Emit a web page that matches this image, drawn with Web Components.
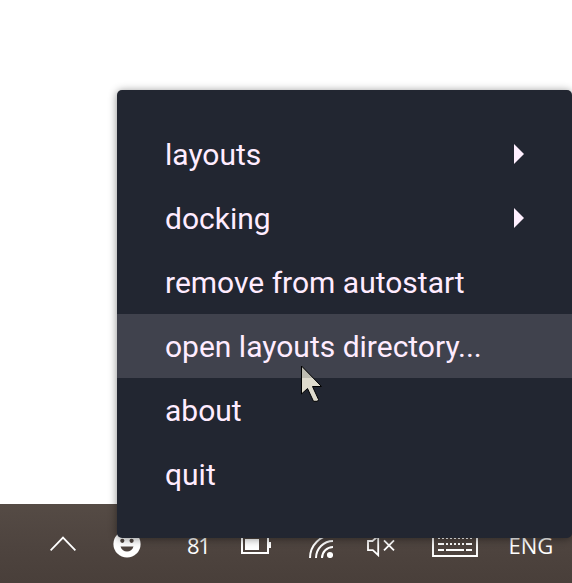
<!DOCTYPE html>
<html lang="en">
<head>
<meta charset="utf-8">
<title>Tray menu</title>
<style>
html,body{margin:0;height:100%;overflow:hidden;background:#fff}
</style>
</head>
<body>
<desktop-view></desktop-view>
<script>
class Base extends HTMLElement {
  constructor() {
    super();
    this.attachShadow({ mode: 'open' }).innerHTML = this.constructor.markup;
  }
}

// One row of the popup menu; the "submenu" attribute adds the arrow.
class MenuRow extends Base {
  static markup = `<style>
    :host{display:flex;align-items:center;justify-content:space-between;height:64px;padding:0 48px;box-sizing:border-box;white-space:nowrap}
    :host([active]){background:#40424d}
    span{padding-top:2px}
    svg{display:none;width:10px;height:20px;fill:#fff0ff}
    :host([submenu]) svg{display:block}
  </style><span><slot></slot></span><svg viewBox="0 0 10 20"><path d="M0 0L10 10L0 20Z"/></svg>`;
}
customElements.define('menu-row', MenuRow);

class PopupMenu extends Base {
  static markup = `<style>
    :host{display:flex;flex-direction:column;width:455px;height:448px;padding:32px 0;box-sizing:border-box;border-radius:5px;
      background:#222631;color:#ffecff;font:30px/60px Roboto,sans-serif;box-shadow:0 1px 8px rgba(0,0,0,.45)}
  </style><slot></slot>`;
}
customElements.define('popup-menu', PopupMenu);

const ICONS = {
  chevron: [26, 16, '<path d="M.6 14.4L13 1.6L25.4 14.4" fill="none" stroke="#fff" stroke-width="1.8"/>'],
  smiley: [28, 28, '<circle cx="14" cy="14" r="13.6" fill="#fff"/><g fill="#4d433e"><circle cx="9.3" cy="10.8" r="2.1"/><circle cx="18.6" cy="10.8" r="2.1"/><path d="M7.5 16.5H20.5C19.5 20 17 21.5 14 21.5S8.500 20 7.500 16.500Z"/></g>'],
  battery: [30, 20, '<path d="M1 1H27V19H1Z" fill="none" stroke="#fff" stroke-width="2"/><path d="M4 5H18V16H4ZM28 8H30V14H28Z" fill="#fff"/>'],
  wifi: [24, 24, '<g fill="none" stroke="#fff" stroke-width="2"><path d="M1 24A23 23 0 0 1 24 1M7 24A17 17 0 0 1 24 7M13 24A11 11 0 0 1 24 13"/></g><circle cx="21" cy="21" r="3.100" fill="#fff"/>'],
  mute: [28, 22, '<g fill="none" stroke="#fff" stroke-width="1.8"><path d="M1 6H5.500L11.200 1V20.200L5.800 15.200H1Z"/><path d="M17 5.300L27 15.300M27 5.300L17 15.300"/></g>'],
  keyboard: [46, 26, '<path d="M1 1H45V25H1Z" fill="none" stroke="#fff" stroke-width="1.9"/><g stroke="#fff" stroke-width="2"><path d="M6 7H40" stroke-dasharray="2 2"/><path d="M6 13H12M34 13H40M6 19H12M14 19H32M34 19H40"/><path d="M14 13H32" stroke-dasharray="2 2"/></g>']
};
class TrayIcon extends HTMLElement {
  connectedCallback() {
    const [w, h, body] = ICONS[this.getAttribute('name')];
    this.attachShadow({ mode: 'open' }).innerHTML =
      `<style>:host{display:block}svg{display:block}</style><svg width="${w}" height="${h}" viewBox="0 0 ${w} ${h}">${body}</svg>`;
  }
}
customElements.define('tray-icon', TrayIcon);

class TaskBar extends Base {
  static markup = `<style>
    :host{display:grid;grid-template-columns:63px 74px 54px 68px 58px 65px 76.500px 1fr;padding-left:50px;height:79px;box-sizing:border-box;
      align-items:start;background:linear-gradient(#554b45,#4d433e 60%,#493f3a);color:#fff;font:22px/30px "Open Sans","Noto Sans",sans-serif}
    tray-icon,span{margin-top:var(--t)}
  </style>
  <tray-icon name="chevron" style="--t:32px"></tray-icon>
  <tray-icon name="smiley" style="--t:26px"></tray-icon>
  <span style="--t:26px;letter-spacing:-1.400px">81</span>
  <tray-icon name="battery" style="--t:30px"></tray-icon>
  <tray-icon name="wifi" style="--t:30px"></tray-icon>
  <tray-icon name="mute" style="--t:31px"></tray-icon>
  <tray-icon name="keyboard" style="--t:27px"></tray-icon>
  <span style="--t:26px">ENG</span>`;
}
customElements.define('task-bar', TaskBar);

class MousePointer extends Base {
  static markup = `<style>:host{display:block}svg{display:block}</style>
  <svg width="24" height="38" viewBox="0 0 24 38">
    <defs><linearGradient id="g" gradientUnits="userSpaceOnUse" x1="0" y1="0" x2="0" y2="38">
      <stop offset=".342" stop-color="#bebcb1"/><stop offset=".342" stop-color="#dfdbcd"/></linearGradient></defs>
    <path d="M1.500 1V29L7.500 23.500L13.500 36.300H17.500L18.500 34.500L12.500 21.500H21.500Z" fill="url(#g)" stroke="#000"/>
  </svg>`;
}
customElements.define('mouse-pointer', MousePointer);

class DesktopView extends Base {
  static markup = `<style>
    :host{display:flex;flex-direction:column;justify-content:flex-end;position:relative;width:572px;height:583px;overflow:hidden;background:#fff}
    popup-menu{position:absolute;left:117px;top:90px}
    mouse-pointer{position:absolute;left:300px;top:365px}
  </style>
  <task-bar></task-bar>
  <popup-menu>
    <menu-row submenu>layouts</menu-row>
    <menu-row submenu>docking</menu-row>
    <menu-row>remove from autostart</menu-row>
    <menu-row active>open layouts directory...</menu-row>
    <menu-row>about</menu-row>
    <menu-row>quit</menu-row>
  </popup-menu>
  <mouse-pointer></mouse-pointer>`;
}
customElements.define('desktop-view', DesktopView);
</script>
</body>
</html>
